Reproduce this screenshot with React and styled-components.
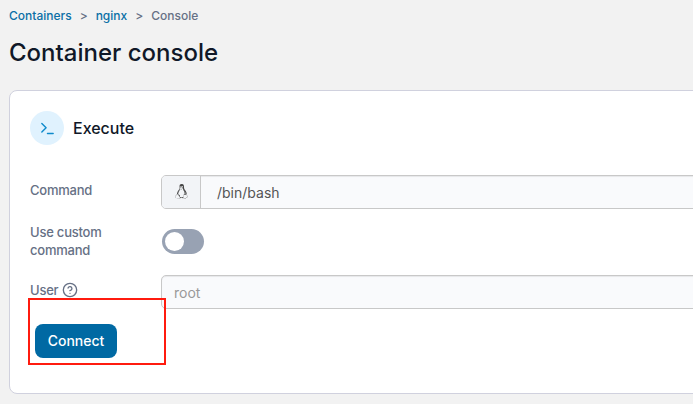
import React from 'react';
import styled, { createGlobalStyle } from 'styled-components';
import { FaLinux } from 'react-icons/fa';
import { HelpCircle, Terminal } from 'lucide-react';

const GlobalStyle = createGlobalStyle`
  * { box-sizing: border-box; }
  body { margin: 0; background: #f2f2f2; font-family: Inter, sans-serif; overflow: hidden; }
`;

const Page = styled.main`
  height: 404px;
  padding: 8px 0 0 9px;
  overflow: hidden;
  background: #f2f2f2;
`;

const Breadcrumbs = styled.nav`
  display: flex;
  height: 15px;
  align-items: center;
  gap: 8px;
  font-size: 12px;
  font-weight: 500;
  color: #667085;
`;

const Crumb = styled.a`
  color: #0b6fa6;
`;

const Title = styled.h1`
  margin: 13px 0 0;
  height: 34px;
  line-height: 34px;
  font-size: 24px;
  font-weight: 500;
  color: #101828;
`;

const Card = styled.section`
  position: relative;
  width: 720px;
  height: 304px;
  margin-top: 20px;
  padding: 20px 0 0 20px;
  border: 1px solid #d0d1de;
  border-radius: 8px;
  background: #fff;
`;

const CardHeader = styled.header`
  display: flex;
  align-items: center;
  gap: 9px;
  height: 34px;
  font-size: 16px;
  font-weight: 500;
  color: #101828;
`;

const IconBadge = styled.span`
  display: grid;
  place-items: center;
  width: 34px;
  height: 34px;
  border-radius: 50%;
  background: #e0f2fe;
  color: #0e8acb;
`;

const Form = styled.form`
  margin-top: 30px;
`;

const Row = styled.div`
  display: grid;
  grid-template-columns: 131px 1fr;
  align-items: center;
  height: 34px;
  margin-bottom: ${({ $gap }) => $gap}px;
`;

const Label = styled.label`
  display: flex;
  align-items: center;
  gap: 4px;
  max-width: 90px;
  margin-top: ${({ $multiline }) => ($multiline ? -2 : -4)}px;
  line-height: 18px;
  font-size: 13px;
  font-weight: 500;
  letter-spacing: -0.22px;
  color: #667085;
`;

const Field = styled.div`
  display: flex;
  align-items: center;
  height: 34px;
  border: 1px solid #c8c8c8;
  border-radius: 5px;
  background: #f9fafc;
  box-shadow: inset 0 1px 1px rgba(0, 0, 0, 0.075);
  font-size: 14px;
  color: ${({ $placeholder }) => ($placeholder ? '#999' : '#555')};
  overflow: hidden;
`;

const Addon = styled.span`
  display: grid;
  place-items: center;
  width: 39px;
  height: 32px;
  border-right: 1px solid #c8c8c8;
  background: #f2f4f7;
  color: #444;
`;

const AddonIcon = styled(FaLinux)`
  margin-bottom: 2px;
`;

const FieldText = styled.span`
  padding-left: ${({ $inset }) => $inset}px;
`;

const Toggle = styled.span`
  width: 42px;
  height: 25px;
  margin: -2px 0 0 1px;
  padding: 3px;
  border-radius: 13px;
  background: #98a2b3;
`;

const Knob = styled.span`
  display: block;
  width: 19px;
  height: 19px;
  border-radius: 50%;
  background: #fff;
`;

const ConnectButton = styled.button`
  display: block;
  width: 82px;
  height: 34px;
  margin: 15px 0 0 5px;
  padding: 0 0 2px;
  border: 0;
  border-radius: 8px;
  background: #0069a3;
  color: #fff;
  font: 500 14px Inter, sans-serif;
`;

const Highlight = styled.div`
  position: absolute;
  left: 18px;
  top: 207px;
  width: 138px;
  height: 67px;
  border: 2px solid #ff1b0f;
  pointer-events: none;
`;

export default function App() {
  return (
    <Page>
      <GlobalStyle />
      <Breadcrumbs>
        <Crumb>Containers</Crumb>
        <span>&gt;</span>
        <Crumb>nginx</Crumb>
        <span>&gt;</span>
        <span>Console</span>
      </Breadcrumbs>
      <Title>Container console</Title>
      <Card>
        <CardHeader>
          <IconBadge><Terminal size={17} strokeWidth={2} /></IconBadge>
          Execute
        </CardHeader>
        <Form>
          <Row $gap={16}>
            <Label>Command</Label>
            <Field>
              <Addon><AddonIcon size={15} /></Addon>
              <FieldText $inset={16}>/bin/bash</FieldText>
            </Field>
          </Row>
          <Row $gap={16}>
            <Label $multiline>Use custom command</Label>
            <Toggle><Knob /></Toggle>
          </Row>
          <Row $gap={0}>
            <Label>User <HelpCircle size={16} strokeWidth={2} /></Label>
            <Field $placeholder><FieldText $inset={12}>root</FieldText></Field>
          </Row>
          <ConnectButton type="button">Connect</ConnectButton>
        </Form>
        <Highlight />
      </Card>
    </Page>
  );
}
